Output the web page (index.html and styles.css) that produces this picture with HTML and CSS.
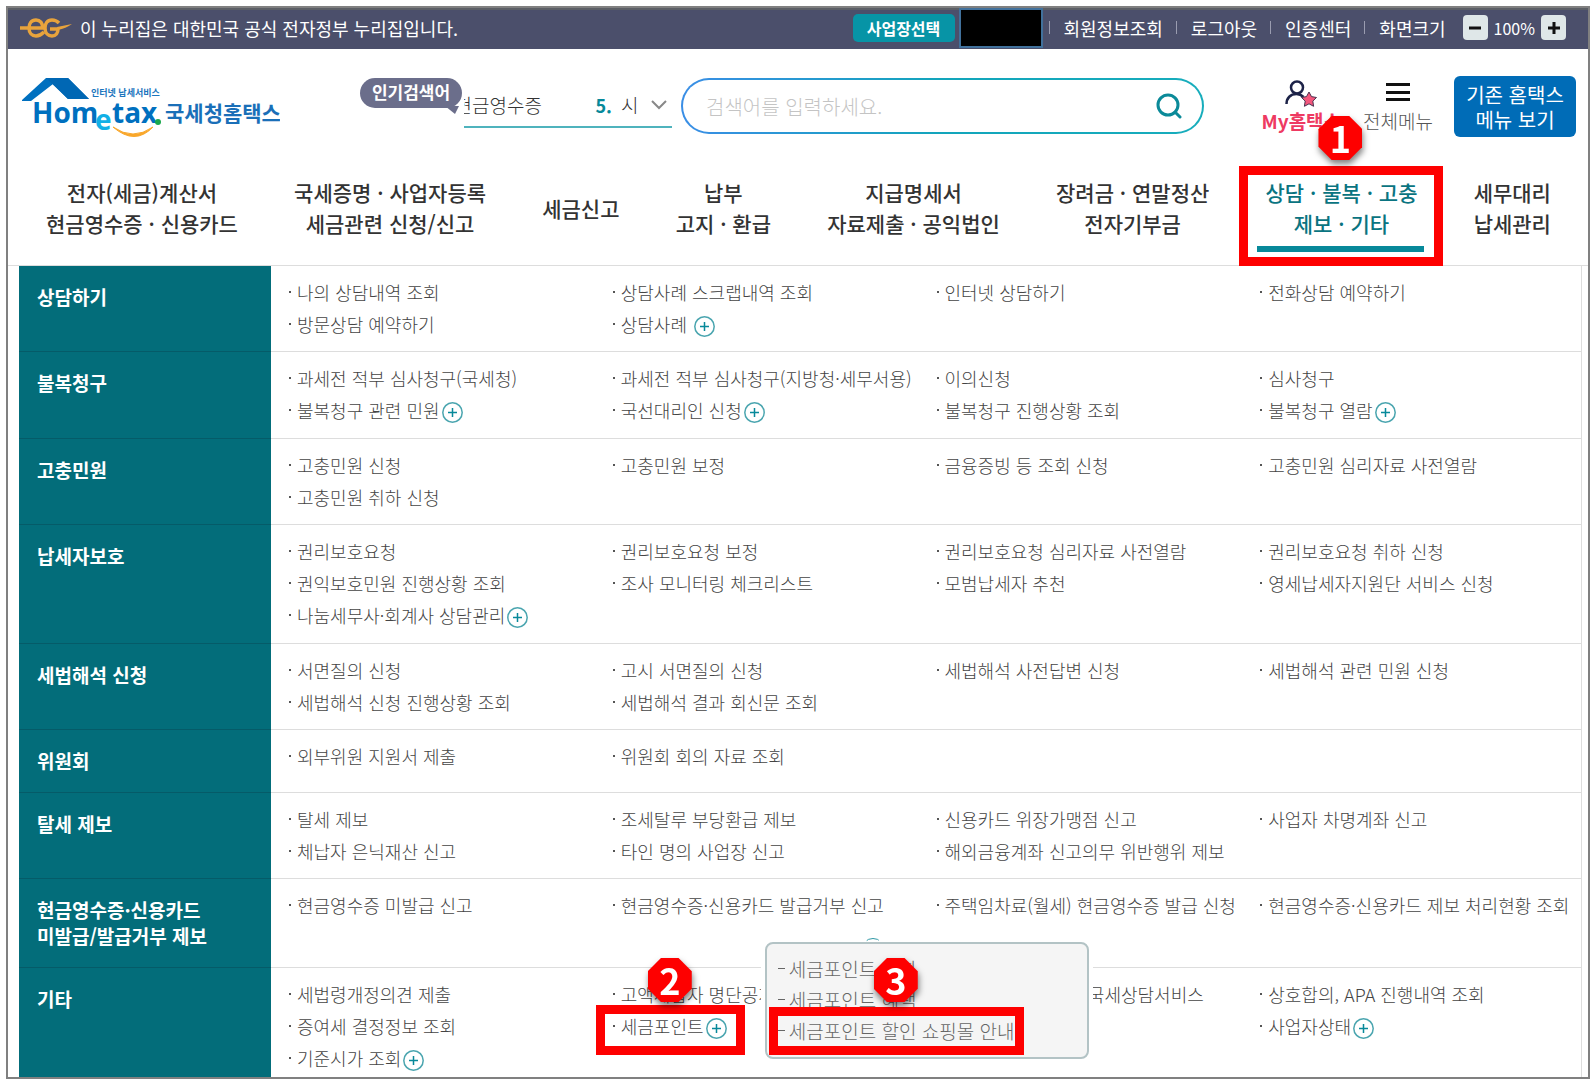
FILE: index.html
```html
<!DOCTYPE html>
<html lang="ko">
<head>
<meta charset="utf-8">
<title>국세청홈택스</title>
<link rel="stylesheet" href="styles.css">
</head>
<body>
<svg width="0" height="0" class="defs" aria-hidden="true">
  <symbol id="plus" viewBox="0 0 21 21"><circle cx="10.500" cy="10.500" r="9.700" fill="none" stroke="#4aa5af" stroke-width="1.500"/><path d="M6 10.500h9M10.500 6v9" stroke="#07899a" stroke-width="1.500"/></symbol>
</svg>
<div class="frame">
  <div class="topbar">
    <svg class="eg" width="52" height="20" viewBox="0 0 52 20" fill="none" stroke="#e8a33c" stroke-width="3.500"><path d="M0 10H22.500C23 5 20 2 16 2c-5 0-7 4-7 8 0 5 3 8 7 8 3 0 5-1 8-4"/><path d="M39 5c-2-2-4-3-7-3-5 0-7 4-7 8 0 5 3 8 7 8 4 0 6-3 6-7H30"/><path d="M37 9l15-3c-4 3-9 5-14 6z" fill="#e8a33c" stroke="none"/></svg>
    <p class="official">이 누리집은 대한민국 공식 전자정부 누리집입니다.</p>
    <div class="util">
      <button class="biz" type="button">사업장선택</button>
      <span class="masked"></span>
      <ul class="links">
        <li><a href="#">회원정보조회</a></li>
        <li><a href="#">로그아웃</a></li>
        <li><a href="#">인증센터</a></li>
        <li>화면크기</li>
      </ul>
      <div class="zoom">
        <button type="button" aria-label="축소"><svg width="14" height="14"><path d="M1 7h12" stroke="#111" stroke-width="3"/></svg></button>
        <span>100%</span>
        <button type="button" aria-label="확대"><svg width="14" height="14"><path d="M1 7h12M7 1v12" stroke="#111" stroke-width="3"/></svg></button>
      </div>
    </div>
  </div>

  <header class="header">
    <a class="logo" href="#" aria-label="국세청홈택스">
      <svg width="258" height="62" viewBox="0 0 258 62">
        <path d="M0 24 24 2H46L67 23H46L31 8 9 25H0z" fill="#0070bf"/>
        <path d="M24 2H46L67 23H46z" fill="#0067b4"/>
        <text x="69" y="20" class="logo-sub">인터넷 납세서비스</text>
        <text x="10" y="47" class="logo-en">Hom</text>
        <text x="73" y="54" class="logo-e">e</text>
        <text x="90" y="47" class="logo-en">tax</text>
        <circle cx="136" cy="46" r="3" fill="#1aa84c"/>
        <path d="M91 51q20 14 40 0q-18 19-40 0z" fill="#f9a72b" stroke="#f9a72b"/>
        <text x="143" y="45" class="logo-ko">국세청홈택스</text>
      </svg>
    </a>
    <div class="popular">
      <strong class="bubble">인기검색어<svg width="14" height="10" viewBox="0 0 14 10"><path d="M0 0h14L10 8z" fill="#6b6e8b"/></svg></strong>
      <div class="roll">
        <a class="word" href="#">현금영수증</a>
        <b>5.</b>
        <a class="next" href="#">시</a>
        <svg width="16" height="10" viewBox="0 0 16 10" fill="none" stroke="#888" stroke-width="2"><path d="M1 1l7 7 7-7"/></svg>
      </div>
    </div>
    <form class="search">
      <input type="text" aria-label="검색어" placeholder="검색어를 입력하세요.">
      <button type="button" aria-label="검색"><svg width="26" height="26" viewBox="0 0 26 26" fill="none" stroke="#0b8a99" stroke-width="3"><circle cx="12" cy="12" r="10"/><path d="M19 19l5 5" stroke-linecap="round"/></svg></button>
    </form>
    <div class="tools">
      <a class="tool my" href="#">
        <svg width="32" height="27" viewBox="0 0 32 27"><g fill="none" stroke="#1d2348" stroke-width="2.500"><circle cx="12" cy="7.500" r="6"/><path d="M1.500 24c0-6 4-10 10-10 3 0 5 1 7 3"/></g><path d="M24 12l2.500 4.600 5 .9-3.700 3.600.8 5.200-4.600-2.500-4.600 2.500.8-5.200-3.700-3.600 5-.9z" fill="#f4567c" stroke="#4a3350"/></svg>
        <span>My홈택스</span>
      </a>
      <a class="tool all" href="#">
        <svg width="24" height="27"><path d="M0 4.500h24M0 12.500h24M0 19.500h24" stroke="#111" stroke-width="3"/></svg>
        <span>전체메뉴</span>
      </a>
      <button class="old" type="button">기존 홈택스<br>메뉴 보기</button>
    </div>
  </header>

  <nav class="gnb">
    <a href="#">전자(세금)계산서<br>현금영수증 · 신용카드</a>
    <a href="#">국세증명 · 사업자등록<br>세금관련 신청/신고</a>
    <a href="#">세금신고</a>
    <a href="#">납부<br>고지 · 환급</a>
    <a href="#">지급명세서<br>자료제출 · 공익법인</a>
    <a href="#">장려금 · 연말정산<br>전자기부금</a>
    <a href="#" class="on">상담 · 불복 · 고충<br>제보 · 기타<span class="mark mark-1"></span><span class="step step-1"><i>1</i></span></a>
    <a href="#">세무대리<br>납세관리</a>
  </nav>

  <main class="menu">
    <section class="row">
      <h2>상담하기</h2>
      <ul>
        <li><a href="#">나의 상담내역 조회</a></li><li><a href="#">상담사례 스크랩내역 조회</a></li><li><a href="#">인터넷 상담하기</a></li><li><a href="#">전화상담 예약하기</a></li>
        <li><a href="#">방문상담 예약하기</a></li><li><a href="#">상담사례&nbsp;</a><button type="button" aria-label="펼치기"><svg><use href="#plus"/></svg></button></li>
      </ul>
    </section>
    <section class="row">
      <h2>불복청구</h2>
      <ul>
        <li><a href="#">과세전 적부 심사청구(국세청)</a></li><li><a href="#">과세전 적부 심사청구(지방청·세무서용)</a></li><li><a href="#">이의신청</a></li><li><a href="#">심사청구</a></li>
        <li><a href="#">불복청구 관련 민원</a><button type="button" aria-label="펼치기"><svg><use href="#plus"/></svg></button></li><li><a href="#">국선대리인 신청</a><button type="button" aria-label="펼치기"><svg><use href="#plus"/></svg></button></li><li><a href="#">불복청구 진행상황 조회</a></li><li><a href="#">불복청구 열람</a><button type="button" aria-label="펼치기"><svg><use href="#plus"/></svg></button></li>
      </ul>
    </section>
    <section class="row">
      <h2>고충민원</h2>
      <ul>
        <li><a href="#">고충민원 신청</a></li><li><a href="#">고충민원 보정</a></li><li><a href="#">금융증빙 등 조회 신청</a></li><li><a href="#">고충민원 심리자료 사전열람</a></li>
        <li><a href="#">고충민원 취하 신청</a></li>
      </ul>
    </section>
    <section class="row">
      <h2>납세자보호</h2>
      <ul>
        <li><a href="#">권리보호요청</a></li><li><a href="#">권리보호요청 보정</a></li><li><a href="#">권리보호요청 심리자료 사전열람</a></li><li><a href="#">권리보호요청 취하 신청</a></li>
        <li><a href="#">권익보호민원 진행상황 조회</a></li><li><a href="#">조사 모니터링 체크리스트</a></li><li><a href="#">모범납세자 추천</a></li><li><a href="#">영세납세자지원단 서비스 신청</a></li>
        <li><a href="#">나눔세무사·회계사 상담관리</a><button type="button" aria-label="펼치기"><svg><use href="#plus"/></svg></button></li>
      </ul>
    </section>
    <section class="row">
      <h2>세법해석 신청</h2>
      <ul>
        <li><a href="#">서면질의 신청</a></li><li><a href="#">고시 서면질의 신청</a></li><li><a href="#">세법해석 사전답변 신청</a></li><li><a href="#">세법해석 관련 민원 신청</a></li>
        <li><a href="#">세법해석 신청 진행상황 조회</a></li><li><a href="#">세법해석 결과 회신문 조회</a></li>
      </ul>
    </section>
    <section class="row">
      <h2>위원회</h2>
      <ul>
        <li><a href="#">외부위원 지원서 제출</a></li><li><a href="#">위원회 회의 자료 조회</a></li>
      </ul>
    </section>
    <section class="row">
      <h2>탈세 제보</h2>
      <ul>
        <li><a href="#">탈세 제보</a></li><li><a href="#">조세탈루 부당환급 제보</a></li><li><a href="#">신용카드 위장가맹점 신고</a></li><li><a href="#">사업자 차명계좌 신고</a></li>
        <li><a href="#">체납자 은닉재산 신고</a></li><li><a href="#">타인 명의 사업장 신고</a></li><li><a href="#">해외금융계좌 신고의무 위반행위 제보</a></li>
      </ul>
    </section>
    <section class="row">
      <h2>현금영수증·신용카드<br>미발급/발급거부 제보</h2>
      <ul>
        <li><a href="#">현금영수증 미발급 신고</a></li><li><a href="#">현금영수증·신용카드 발급거부 신고</a></li><li><a href="#">주택임차료(월세) 현금영수증 발급 신청</a></li><li><a href="#">현금영수증·신용카드 제보 처리현황 조회</a></li>
      </ul>
    </section>
    <section class="row">
      <h2>기타</h2>
      <ul>
        <li><a href="#">세법령개정의견 제출</a></li><li><a href="#">고액체납자 명단공개</a></li><li><a href="#">국세청 홈택스 126 국세상담서비스</a></li><li><a href="#">상호합의, APA 진행내역 조회</a></li>
        <li><a href="#">증여세 결정정보 조회</a></li>
        <li class="open"><a href="#">세금포인트</a><button type="button" aria-label="접기"><svg><use href="#plus"/></svg></button>
          <span class="mark mark-2"></span><span class="step step-2"><i>2</i></span>
          <div class="popup">
            <a href="#">세금포인트 조회</a>
            <a href="#">세금포인트 혜택</a>
            <a href="#">세금포인트 할인 쇼핑몰 안내</a>
            <span class="mark mark-3"></span><span class="step step-3"><i>3</i></span>
          </div>
        </li>
        <li class="last"><a href="#">사업자상태</a><button type="button" aria-label="펼치기"><svg><use href="#plus"/></svg></button></li>
        <li><a href="#">기준시가 조회</a><button type="button" aria-label="펼치기"><svg><use href="#plus"/></svg></button></li>
      </ul>
    </section>
  </main>
</div>
</body>
</html>
```
FILE: styles.css
```css
* { box-sizing: border-box; }
body {
  margin: 6px 3px 4px 6px;
  background: #fff;
  color: #333;
  font-family: "Noto Sans CJK KR", "Noto Sans", sans-serif;
  font-size: 18px;
}
a { color: inherit; text-decoration: none; }
ul, p, h2 { margin: 0; padding: 0; }
ul { list-style: none; }
button { font-family: inherit; border: 0; padding: 0; cursor: pointer; }
.defs { position: absolute; }

.frame { border: 2px solid #808080; }

/* top bar */
.topbar {
  display: flex;
  align-items: center;
  height: 41px;
  padding: 0 22px 4px 12px;
  border-top: 2px solid #5c5f66;
  background: #4b4f6b;
  color: #fff;
}
.official { margin-left: 8px; line-height: 24px; }
.util { display: flex; align-items: center; margin-left: auto; }
.biz {
  width: 102px;
  height: 28px;
  border-radius: 5px;
  background: #0794a6;
  color: #fff;
  font-size: 16px;
  font-weight: 700;
  line-height: 24px;
}
.masked { width: 84px; height: 40px; margin-left: 4px; background: #000; border: 2px solid #41719c; }
.links { display: flex; margin: 0 4px 0 6px; line-height: 24px; }
.links li { display: flex; align-items: center; margin-right: 13px; }
.links li::before { content: ""; width: 1px; height: 13px; margin-right: 14px; background: #9a9cb0; }
.zoom { display: flex; align-items: center; gap: 6px; font-size: 16px; line-height: 24px; }
.zoom button { display: grid; place-items: center; width: 25px; height: 25px; border-radius: 4px; background: #dfe7e8; }

/* header */
.header { display: flex; align-items: flex-start; padding: 27px 12px 0 14px; }
.logo { display: block; height: 61px; }
.logo-sub { font-size: 9px; font-weight: 700; fill: #1a75bd; }
.logo-en { font-family: "Open Sans", sans-serif; font-size: 28px; font-weight: 700; fill: #0070bf; }
.logo-e { font-family: "Open Sans", sans-serif; font-size: 28px; font-weight: 700; fill: #12b0e6; }
.logo-ko { font-size: 21px; font-weight: 700; fill: #1a6fb8; }
.popular { display: flex; flex: none; margin-left: 80px; }
.bubble {
  position: relative;
  width: 102px;
  height: 30px;
  margin-top: 2px;
  border-radius: 15px;
  background: #6b6e8b;
  color: #fff;
  font-size: 17px;
  line-height: 28px;
  text-align: center;
}
.bubble svg { position: absolute; right: 3px; bottom: -8px; }
.roll {
  display: flex;
  align-items: center;
  width: 208px;
  height: 52px;
  margin-left: 2px;
  padding: 7px 5px 0 0;
  border-bottom: 2px solid #4fb3bd;
  font-size: 19px;
  font-weight: 300;
}
.word { display: flex; justify-content: flex-end; width: 78px; overflow: hidden; white-space: nowrap; }
.roll b { margin-left: auto; color: #07899a; font-size: 18px; font-weight: 700; }
.next { width: 18px; margin: 0 12px 0 9px; }
.search {
  display: flex;
  align-items: center;
  flex: 1;
  max-width: 523px;
  height: 56px;
  margin: 2px 0 0 9px;
  padding: 0 20px 0 23px;
  border: 2px solid transparent;
  border-radius: 28px;
  background: linear-gradient(#fff, #fff) padding-box, linear-gradient(90deg, #3a8ee6, #12a5bb 50%, #17adbc) border-box;
}
.search input { flex: 1; min-width: 0; border: 0; outline: 0; padding: 0; background: none; font-family: inherit; font-size: 20px; font-weight: 300; }
.search input::placeholder { color: #c4c4c4; }
.search button { height: 26px; background: none; }
.tools { display: flex; flex: none; margin-left: auto; }
.tool { display: flex; flex-direction: column; align-items: center; padding-top: 4px; font-size: 19px; line-height: 28px; }
.my { color: #ee3a62; font-weight: 700; }
.all { margin: 0 21px 0 22px; color: #555; font-weight: 300; }
.old { width: 122px; height: 61px; border-radius: 6px; background: #006cb7; color: #fff; font-size: 20px; line-height: 25px; }

/* main navigation */
.gnb {
  display: flex;
  justify-content: space-between;
  padding: 40px 37px 26px 38px;
  border-bottom: 1px solid #ddd;
  font-size: 21px;
  font-weight: 500;
  line-height: 31px;
  text-align: center;
}
.gnb a { display: grid; align-content: center; height: 62px; white-space: nowrap; }
.gnb .on { position: relative; color: #0a7481; }
.gnb .on::after { content: ""; position: absolute; left: -8px; right: -7px; bottom: -13px; height: 6px; background: #07899a; }

/* sub menu */
.menu { margin: 0 6px 0 11px; border-right: 1px solid #ddd; }
.row { display: grid; grid-template-columns: 252px 1fr; }
.row h2 {
  padding: 18px;
  border-bottom: 1px solid #055b68;
  background: #036d7a;
  color: #fff;
  font-size: 19px;
  line-height: 26px;
  white-space: nowrap;
}
.row ul {
  display: grid;
  grid-template-columns: repeat(4, 1fr);
  align-content: start;
  padding: 10px 0 12px 15px;
  border-bottom: 1px solid #ddd;
  color: #444;
  font-weight: 300;
  line-height: 32px;
}
.row:nth-child(odd) ul { padding-bottom: 11px; }
.row li { display: flex; align-items: center; height: 32px; white-space: nowrap; }
.row li::before { content: ""; width: 2px; height: 2px; margin: 0 6px 0 3px; background: #555; }
.row li button { height: 21px; margin: 4px 0 0 2px; background: none; }
.row li svg { display: block; width: 21px; height: 21px; }
.row:last-child ul { padding-bottom: 3px; border-bottom: 0; }
.row:last-child h2 { border-bottom: 0; }
.row .last { grid-column: 4; }
.row .open { position: relative; }
.popup {
  position: absolute;
  left: 155px;
  top: -68px;
  width: 324px;
  padding: 9px 11px 11px;
  border: 2px solid #b3c3c5;
  border-radius: 8px;
  background: #f5f5f5;
  box-shadow: 0 0 0 4px #fff;
  color: #666;
  font-size: 19px;
  line-height: 31px;
}
.popup a { display: flex; align-items: center; }
.popup a::before { content: ""; width: 7px; height: 1px; margin-right: 4px; background: #666; }
.popup::before {
  content: "";
  position: absolute;
  left: 94px;
  top: -6px;
  width: 22px;
  height: 22px;
  border: 1px solid #2f98a5;
  border-radius: 50%;
  clip-path: inset(0 6px 20px 6px);
}

/* guide marks */
.mark { position: absolute; border: 9px solid #fe0000; }
.mark-1 { left: -26px; right: -26px; top: -11px; height: 100px; z-index: 1; }
.mark-2 { left: -14px; top: -5px; width: 149px; height: 50px; }
.mark-3 { left: 2px; top: 63px; width: 255px; height: 48px; }
.step { position: absolute; z-index: 2; filter: drop-shadow(1px 4px 3px rgba(0, 0, 0, .5)); }
.step i {
  display: block;
  width: 44px;
  height: 44px;
  background: #fe0000;
  clip-path: polygon(30% 0, 70% 0, 100% 30%, 100% 70%, 70% 100%, 30% 100%, 0 70%, 0 30%);
  color: #fff;
  font-size: 36px;
  font-style: normal;
  font-weight: 700;
  line-height: 42px;
  text-align: center;
}
.step-1 { left: 53px; top: -61px; }
.step-2 { left: 38px; top: -52px; }
.step-3 { left: 107px; top: 14px; }
```
